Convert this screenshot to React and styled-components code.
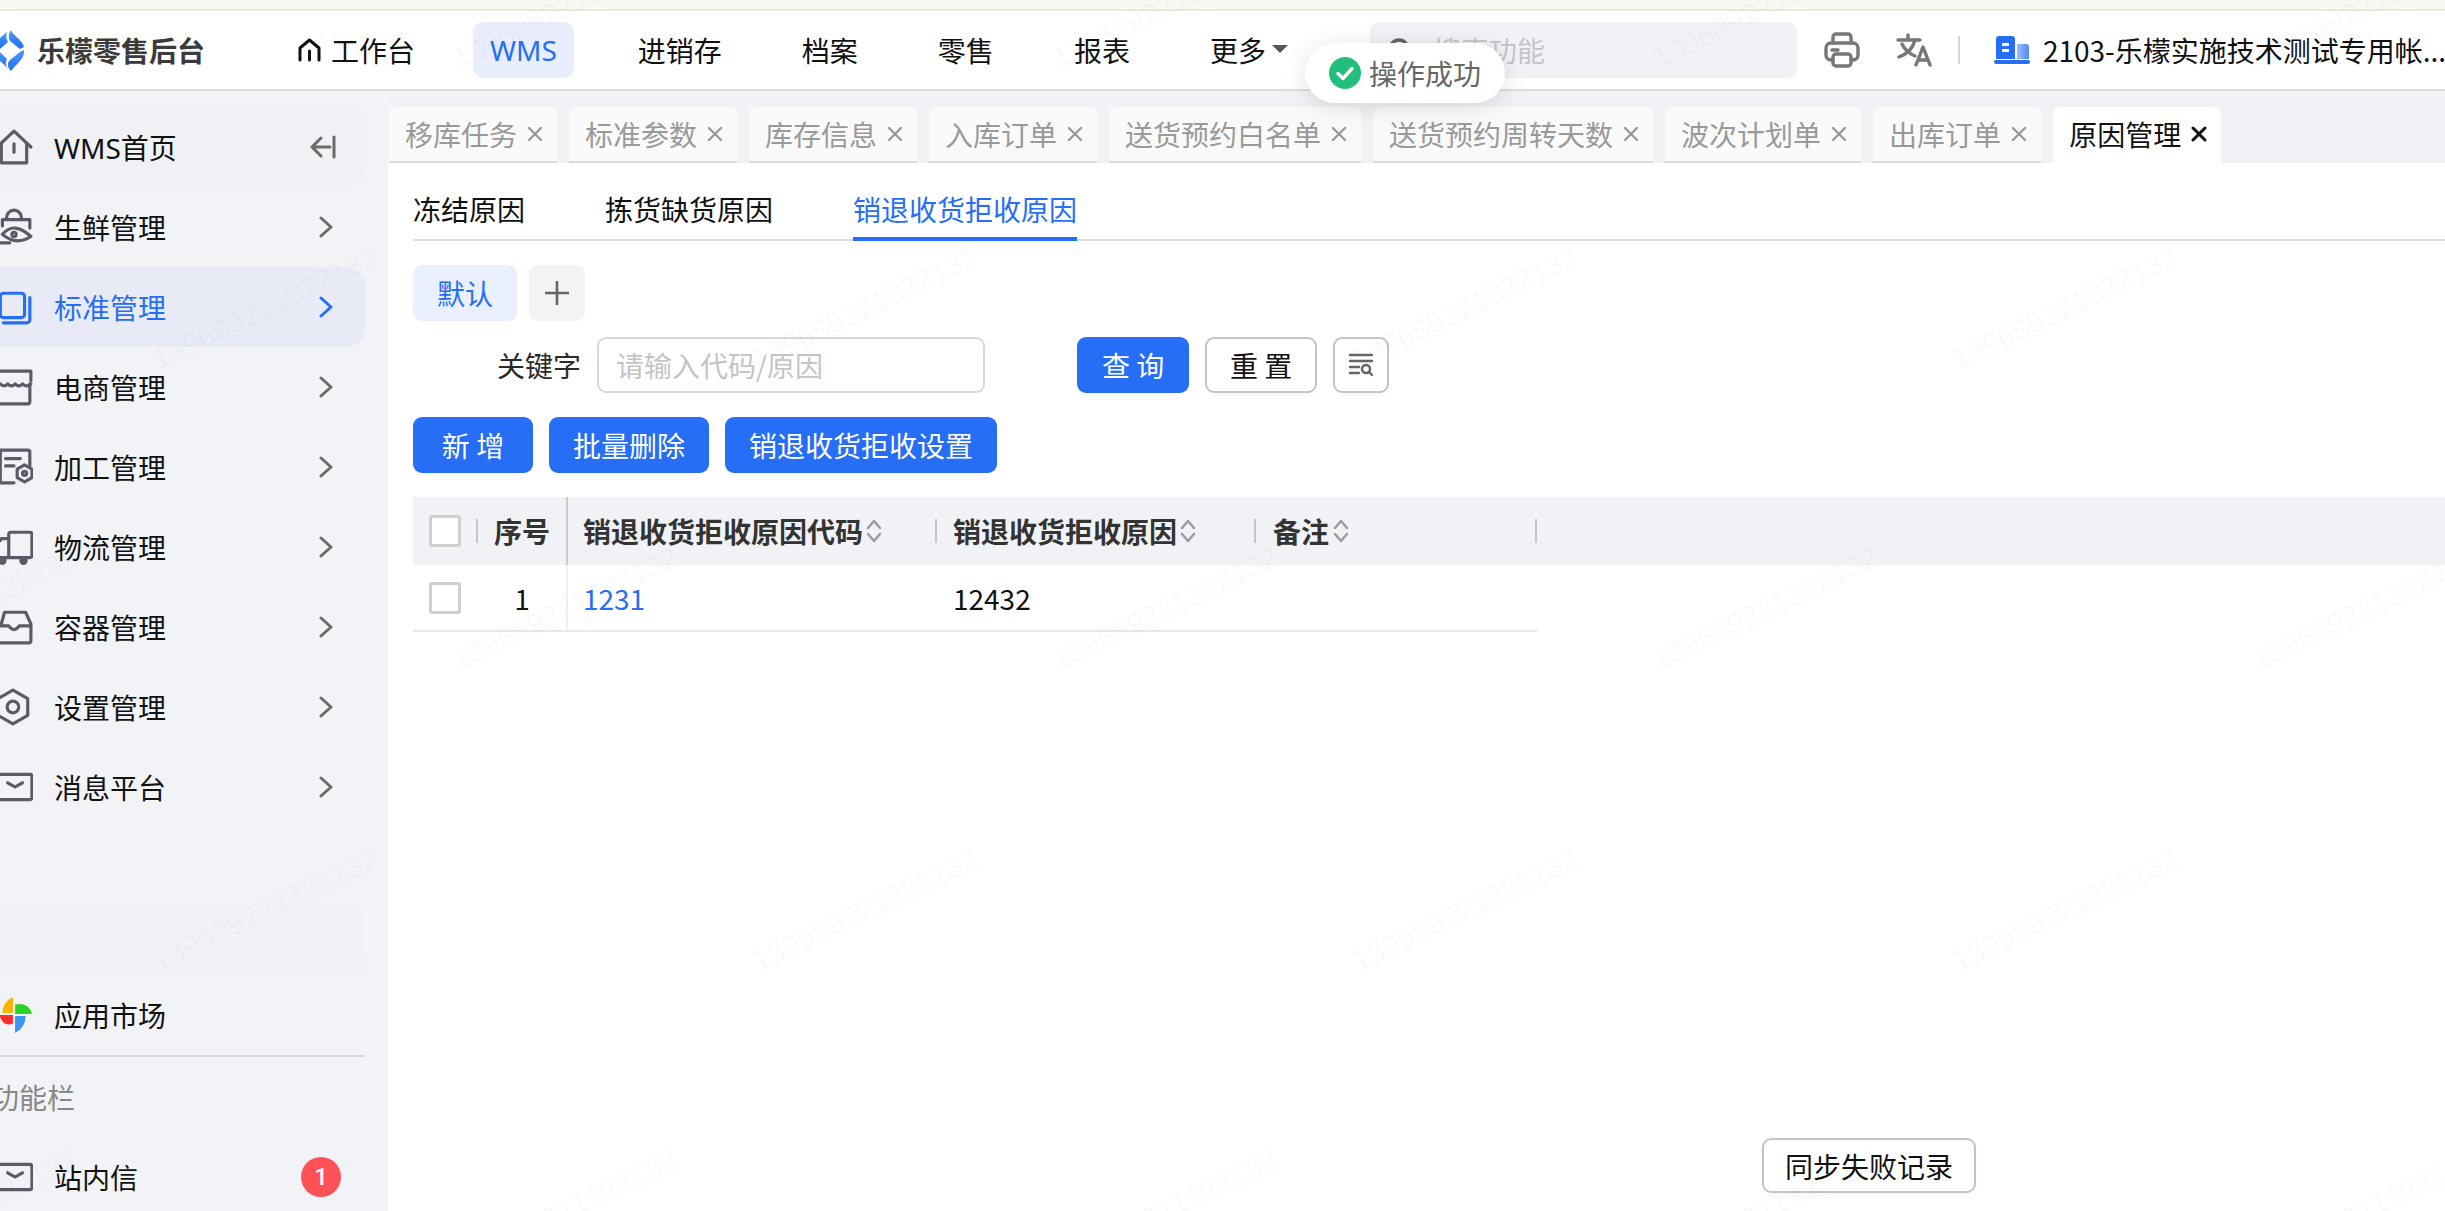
import React from "react";
import styled, { createGlobalStyle } from "styled-components";

const BLUE = "#266ef5";
const FONT = '"Noto Sans CJK SC", "Liberation Sans", sans-serif';

const Global = createGlobalStyle`
  html, body { margin: 0; padding: 0; background: #fff; overflow: hidden; }
  body { font-family: ${FONT}; font-size: 28px; color: #111; }
  * { box-sizing: border-box; }
`;

const Page = styled.div`
  position: relative;
  width: 2445px;
  height: 1211px;
  overflow: hidden;
  display: flex;
  flex-direction: column;
`;
const TopStrip = styled.div`
  height: 11px;
  flex: none;
  background: #f6f9ef;
  border-bottom: 2px solid #e6ebdc;
`;
const Header = styled.header`
  height: 80px;
  flex: none;
  display: flex;
  align-items: center;
  background: #fff;
  border-bottom: 2px solid #dcdcdd;
  white-space: nowrap;
`;
const Logo = styled.div`
  width: 281px;
  flex: none;
  display: flex;
  align-items: center;
  gap: 13px;
  font-weight: 700;
  color: #3b3b3d;
  font-size: 28px;
`;
const LogoMark = styled.svg`
  width: 24px;
  height: 41px;
  flex: none;
`;
const Nav = styled.nav`
  display: flex;
  align-items: center;
  gap: 48px;
`;
const NavItem = styled.div`
  height: 56px;
  padding: 0 ${(p) => (p.$active ? 17 : 16)}px;
  display: flex;
  align-items: center;
  gap: 9px;
  border-radius: 10px;
  line-height: 56px;
  color: ${(p) => (p.$active ? BLUE : "#111")};
  background: ${(p) => (p.$active ? "#e8eefc" : "transparent")};
  margin-right: ${(p) => (p.$tight ? "-6px" : "0")};
`;
const Latin = styled.span`
  font-family: "Noto Sans", sans-serif;
`;
const MoreArrow = styled.i`
  width: 0;
  height: 0;
  border-left: 8px solid transparent;
  border-right: 8px solid transparent;
  border-top: 8px solid #555;
  margin-left: -3px;
  margin-top: -2px;
`;
const Search = styled.div`
  width: 427px;
  height: 56px;
  margin-left: 66px;
  flex: none;
  border-radius: 9px;
  background: #f1f2f5;
  display: flex;
  align-items: center;
  gap: 18px;
  padding-left: 15px;
  color: #c4c5c8;
`;
const HeaderIcon = styled.svg`
  flex: none;
  margin-left: ${(p) => p.$ml}px;
  fill: none;
  stroke: #777;
  stroke-width: 3.4;
  stroke-linecap: round;
  stroke-linejoin: round;
`;
const HeaderDivider = styled.div`
  width: 2px;
  height: 28px;
  margin-left: 26px;
  background: #d5d5d5;
  flex: none;
`;
const BuildingIcon = styled.svg`
  flex: none;
  margin-left: 34px;
`;
const Account = styled.div`
  margin-left: 13px;
  color: #111;
`;
const Body = styled.div`
  flex: 1;
  display: flex;
  min-height: 0;
`;
const Sidebar = styled.aside`
  width: 388px;
  flex: none;
  background: #f2f3f6;
  padding-top: 16px;
  display: flex;
  flex-direction: column;
  overflow: hidden;
`;
const MenuRow = styled.div`
  width: 365px;
  height: 80px;
  flex: none;
  display: flex;
  align-items: center;
  padding-right: 32px;
  border-radius: 0 18px 18px 0;
  color: ${(p) => (p.$active ? BLUE : "#111")};
  background: ${(p) => (p.$active ? "#e8ebf5" : p.$soft ? "#f0f1f4" : "transparent")};
`;
const MenuIcon = styled.svg`
  width: 38px;
  height: 38px;
  flex: none;
  margin-left: -5px;
  margin-right: 21px;
  fill: none;
  stroke: ${(p) => (p.$active ? BLUE : "#5a5b66")};
  stroke-width: 3;
  stroke-linecap: round;
  stroke-linejoin: round;
`;
const MenuText = styled.span`
  flex: 1;
`;
const Chevron = styled.svg`
  width: 14px;
  height: 22px;
  flex: none;
  fill: none;
  stroke: ${(p) => (p.$active ? BLUE : "#6b6b6b")};
  stroke-width: 3;
  stroke-linecap: round;
  stroke-linejoin: round;
`;
const Collapse = styled.svg`
  width: 28px;
  height: 24px;
  flex: none;
  margin-right: -5px;
  fill: none;
  stroke: #6b6b6b;
  stroke-width: 3;
  stroke-linecap: round;
  stroke-linejoin: round;
`;
const SideBottom = styled.div`
  height: 236px;
  flex: none;
`;
const SideFade = styled.div`
  height: 95px;
  width: 365px;
  margin-top: auto;
  flex: none;
  background: linear-gradient(180deg, rgba(0, 0, 0, 0), rgba(0, 0, 0, 0.008));
`;
const SideDivider = styled.div`
  width: 365px;
  height: 2px;
  background: #d8d9dc;
`;
const SideTitle = styled.div`
  height: 80px;
  margin-left: -9px;
  line-height: 80px;
  color: #888;
`;
const Badge = styled.span`
  width: 40px;
  height: 40px;
  margin-right: -8px;
  flex: none;
  border-radius: 50%;
  background: #ff5258;
  color: #fff;
  font-size: 24px;
  font-family: "Roboto", sans-serif;
  font-weight: 500;
  display: flex;
  align-items: center;
  justify-content: center;
`;
const Main = styled.main`
  flex: 1;
  min-width: 0;
  position: relative;
  background: #fff;
  display: flex;
  flex-direction: column;
`;
const TabStrip = styled.div`
  height: 72px;
  flex: none;
  background: #f1f2f5;
  padding: 16px 0 0 1px;
  display: flex;
  gap: 12px;
  white-space: nowrap;
`;
const Tab = styled.div`
  height: 56px;
  padding: 0 14px 0 16px;
  display: flex;
  align-items: center;
  gap: 10px;
  border-radius: 7px 7px 0 0;
  color: ${(p) => (p.$active ? "#111" : "#999")};
  background: ${(p) => (p.$active ? "#fff" : "#fafafa")};
  border-bottom: 2px solid ${(p) => (p.$active ? "#fff" : "#dcdcdc")};
`;
const TabClose = styled.svg`
  width: 16px;
  height: 16px;
  flex: none;
  stroke: ${(p) => (p.$active ? "#111" : "#999")};
  stroke-width: ${(p) => (p.$active ? 3 : 2.4)};
  stroke-linecap: round;
`;
const Content = styled.div`
  flex: 1;
  min-height: 0;
  padding-left: 25px;
  display: flex;
  flex-direction: column;
`;
const SubTabs = styled.div`
  flex: none;
  display: flex;
  gap: 80px;
  padding-top: 26px;
  border-bottom: 2px solid #dcdcdc;
`;
const SubTab = styled.div`
  line-height: 40px;
  padding-bottom: 8px;
  margin-bottom: -2px;
  color: ${(p) => (p.$active ? BLUE : "#111")};
  border-bottom: 4px solid ${(p) => (p.$active ? BLUE : "transparent")};
`;
const PillRow = styled.div`
  display: flex;
  gap: 12px;
  margin-top: 24px;
  height: 56px;
`;
const Pill = styled.div`
  width: 104px;
  border-radius: 9px;
  background: #e9effc;
  color: ${BLUE};
  display: flex;
  align-items: center;
  justify-content: center;
`;
const PlusPill = styled.div`
  width: 56px;
  border-radius: 9px;
  background: #f2f3f5;
  display: flex;
  align-items: center;
  justify-content: center;
`;
const PlusIcon = styled.svg`
  width: 26px;
  height: 26px;
  stroke: #666;
  stroke-width: 2.6;
`;
const FilterRow = styled.div`
  display: flex;
  align-items: center;
  margin-top: 16px;
  height: 56px;
`;
const FilterLabel = styled.label`
  margin-left: 84px;
  color: #2a2a2a;
  white-space: nowrap;
`;
const TextInput = styled.div`
  width: 388px;
  height: 56px;
  margin-left: 16px;
  border: 2px solid #d9d9d9;
  border-radius: 9px;
  padding-left: 17px;
  display: flex;
  align-items: center;
  color: #c4c4c4;
`;
const Button = styled.button`
  height: 56px;
  width: ${(p) => (p.$w ? `${p.$w}px` : "auto")};
  margin-left: ${(p) => p.$ml || 0}px;
  padding: 0;
  flex: none;
  font: inherit;
  border-radius: 9px;
  border: ${(p) => (p.$primary ? "none" : "2px solid #c4c4c4")};
  background: ${(p) => (p.$primary ? BLUE : "#fff")};
  color: ${(p) => (p.$primary ? "#fff" : "#111")};
  box-shadow: 0 3px 0 rgba(0, 0, 0, 0.02);
  display: flex;
  align-items: center;
  justify-content: center;
`;
const FilterGlyph = styled.svg`
  width: 26px;
  height: 26px;
  fill: none;
  stroke: #666;
  stroke-width: 2.4;
  stroke-linecap: round;
`;
const ActionRow = styled.div`
  display: flex;
  gap: 16px;
  margin-top: 24px;
`;
const TableHead = styled.div`
  margin-top: 24px;
  height: 68px;
  flex: none;
  background: #f1f2f5;
  display: grid;
  grid-template-columns: 155px 369px 319px 281px;
  font-weight: 700;
  color: #333;
`;
const TableRow = styled.div`
  width: 1124px;
  height: 67px;
  flex: none;
  display: grid;
  grid-template-columns: 155px 369px 319px 281px;
  border-bottom: 2px solid #e8e8e8;
`;
const FixedCell = styled.div`
  display: flex;
  align-items: center;
  padding-left: 16px;
  border-right: 2px solid ${(p) => (p.$head ? "#c9cbd2" : "#f0f0f0")};
`;
const Checkbox = styled.span`
  width: 32px;
  height: 32px;
  flex: none;
  background: #fff;
  border: 3px solid #cfcfcf;
  border-radius: 3px;
`;
const ThinBar = styled.span`
  width: 2px;
  height: 24px;
  flex: none;
  background: #c4c6cc;
  margin-left: ${(p) => p.$ml || 0}px;
`;
const SeqText = styled.span`
  flex: 1;
  text-align: center;
`;
const SeqSpacer = styled.span`
  width: 17px;
  flex: none;
`;
const HeadCell = styled.div`
  display: flex;
  align-items: center;
  padding-left: ${(p) => p.$pl || 16}px;
  gap: ${(p) => p.$gap || 3}px;
  white-space: nowrap;
`;
const Grow = styled.span`
  flex: 1;
`;
const SortIcon = styled.svg`
  width: 16px;
  height: 26px;
  flex: none;
  fill: none;
  stroke: #9a9a9a;
  stroke-width: 2.4;
  stroke-linecap: round;
  stroke-linejoin: round;
`;
const BodyCell = styled.div`
  display: flex;
  align-items: center;
  padding-left: ${(p) => p.$pl || 16}px;
  color: ${(p) => (p.$link ? BLUE : "#111")};
`;
const SyncButton = styled(Button)`
  position: absolute;
  left: 1374px;
  top: 1047px;
  width: 214px;
  height: 55px;
  box-shadow: 0 2px 4px rgba(0, 0, 0, 0.04);
`;
const Toast = styled.div`
  position: absolute;
  left: 1305px;
  top: 43px;
  width: 200px;
  height: 60px;
  border-radius: 30px;
  background: #fff;
  box-shadow: 0 4px 24px rgba(0, 0, 0, 0.12);
  display: flex;
  align-items: center;
  gap: 8px;
  padding-left: 24px;
  color: #666;
  z-index: 30;
`;
const ToastIcon = styled.svg`
  width: 32px;
  height: 32px;
  flex: none;
`;
const WatermarkLayer = styled.div`
  position: absolute;
  inset: 0;
  pointer-events: none;
  overflow: hidden;
  z-index: 20;
`;
const Mark = styled.span.attrs((p) => ({ style: { left: p.$x, top: p.$y } }))`
  position: absolute;
  transform: translate(-50%, -50%) rotate(-25.7deg);
  font-family: "Liberation Sans", sans-serif;
  font-size: 29.5px;
  color: rgba(0, 0, 0, 0.028);
  white-space: nowrap;
`;

const marks = [];
for (let j = -1; j < 3; j++) {
  for (let i = -1; i < 5; i++) {
    marks.push([265 + 600 * i, 308 + 602 * j]);
    marks.push([565 + 600 * i, 609 + 602 * j]);
  }
}

const ChevronRight = ({ active }) => (
  <Chevron viewBox="0 0 14 22" $active={active}>
    <path d="M2 2l10 9-10 9" />
  </Chevron>
);

const icons = {
  home: (
    <>
      <path d="M2 18L18 3l16 15" />
      <path d="M6 15v18h24V15" />
      <path d="M18 15v8" />
    </>
  ),
  fresh: (
    <>
      <path d="M11 11V9a7 7 0 0 1 14 0v2" />
      <path d="M7 17v-6h26v8" />
      <path d="M7 25q11-13 27 2q-14 9-27-2" />
      <circle cx="18" cy="25" r="2" />
      <path d="M4 33h10" />
    </>
  ),
  standard: (
    <>
      <rect x="5" y="5" width="23" height="23" rx="3" />
      <path d="M33 9v21a3 3 0 0 1-3 3H8" />
    </>
  ),
  shop: (
    <>
      <path d="M5 3h29v9M34 12v-9" />
      <path d="M5 15q4 4 7 0q4 4 7 0q4 4 7 0q4 4 8 0" />
      <path d="M33 15v17a2 2 0 0 1-2 2H5" />
    </>
  ),
  process: (
    <>
      <path d="M33 17V4a2 2 0 0 0-2-2H5v31h13" />
      <path d="M10 10h14M10 17h8" />
      <path d="M28 16l7 4v8l-7 4-7-4v-8z" />
      <circle cx="28" cy="24" r="2" />
    </>
  ),
  truck: (
    <>
      <path d="M13 26V6a2 2 0 0 1 2-2h18a2 2 0 0 1 2 2v20a2 2 0 0 1-2 2H5" />
      <path d="M13 10H6l-1 2" />
      <circle cx="7" cy="31" r="2.5" fill="#5a5b66" />
      <circle cx="27" cy="31" r="2.5" fill="#5a5b66" />
    </>
  ),
  box: (
    <>
      <path d="M6 15l3-11h20l5 11v16a2 2 0 0 1-2 2H5" />
      <path d="M5 17h8q5 7 10 0h11" />
    </>
  ),
  gear: (
    <>
      <path d="M17 2l14 8v16l-14 8-14-8V10z" />
      <circle cx="17" cy="18" r="5.500" />
    </>
  ),
  mail: (
    <>
      <path d="M5 6h28a2 2 0 0 1 2 2v20a2 2 0 0 1-2 2H5" />
      <path d="M12 14l7 4 7-4" />
    </>
  ),
};

const menu = [
  ["生鲜管理", "fresh"],
  ["标准管理", "standard", true],
  ["电商管理", "shop"],
  ["加工管理", "process"],
  ["物流管理", "truck"],
  ["容器管理", "box"],
  ["设置管理", "gear"],
  ["消息平台", "mail"],
];

const tabs = [
  "移库任务",
  "标准参数",
  "库存信息",
  "入库订单",
  "送货预约白名单",
  "送货预约周转天数",
  "波次计划单",
  "出库订单",
];

const Close = ({ active }) => (
  <TabClose viewBox="0 0 16 16" $active={active}>
    <path d="M2 2l12 12M14 2L2 14" />
  </TabClose>
);

const Sort = () => (
  <SortIcon viewBox="0 0 16 26">
    <path d="M2 10l6-7 6 7M2 16l6 7 6-7" />
  </SortIcon>
);

export default function App() {
  return (
    <Page>
      <Global />
      <TopStrip />
      <Header>
        <Logo>
          <LogoMark viewBox="0 0 24 41">
            <defs>
              <linearGradient id="lg" x1="0" y1="0" x2="0" y2="1">
                <stop offset="0" stopColor="#4a97fa" />
                <stop offset="1" stopColor="#2470f2" />
              </linearGradient>
            </defs>
            <path d="M11 0C12 5 22 9 24 17L20 19 10 11C8 7 9 3 11 0z" fill="url(#lg)" />
            <path d="M24 20C25 29 16 34 11 41C7 37 7 33 10 30L20 22z" fill="url(#lg)" />
            <path d="M7 2C6 6 6 9 8 12L0 19V8z" fill="url(#lg)" />
            <path d="M0 22L7 29C5 33 6 36 8 39C5 35 2 33 0 31z" fill="url(#lg)" />
          </LogoMark>
          乐檬零售后台
        </Logo>
        <Nav>
          <NavItem $tight>
            <svg width="25" height="24" viewBox="0 0 25 24" fill="none" stroke="#111" strokeWidth="3" strokeLinecap="round" strokeLinejoin="round">
              <path d="M3 22V10L12.5 2 22 10v12" />
              <path d="M12.5 13v9" />
            </svg>
            工作台
          </NavItem>
          <NavItem $active><Latin>WMS</Latin></NavItem>
          <NavItem>进销存</NavItem>
          <NavItem>档案</NavItem>
          <NavItem>零售</NavItem>
          <NavItem>报表</NavItem>
          <NavItem>
            更多
            <MoreArrow />
          </NavItem>
        </Nav>
        <Search>
          <svg width="30" height="30" viewBox="0 0 30 30" fill="none" stroke="#666" strokeWidth="3.5" strokeLinecap="round">
            <circle cx="14" cy="14" r="9" />
            <path d="M21 21l5 5" />
          </svg>
          搜索功能
        </Search>
        <HeaderIcon $ml={27} width="36" height="36" viewBox="0 0 36 36">
          <path d="M9 11V5a3 3 0 0 1 3-3h12a3 3 0 0 1 3 3v6" />
          <path d="M9 28H7a5 5 0 0 1-5-5v-7a5 5 0 0 1 5-5h22a5 5 0 0 1 5 5v7a5 5 0 0 1-5 5h-2" />
          <rect x="9" y="22" width="18" height="12" rx="3" />
          <path d="M8 18h6" />
        </HeaderIcon>
        <HeaderIcon $ml={36} width="36" height="34" viewBox="0 0 36 34">
          <path d="M2 7h22M12 2v5" />
          <path d="M19 7c-2 8-8 14-16 17" />
          <path d="M6 11c3 6 8 10 13 12" />
          <path d="M20 32l7-18 7 18M22.500 27h9" />
        </HeaderIcon>
        <HeaderDivider />
        <BuildingIcon width="36" height="30" viewBox="0 0 36 30">
          <defs>
            <linearGradient id="bd" x1="0" y1="0" x2="1" y2="0">
              <stop offset="0" stopColor="#9dbcf8" />
              <stop offset="1" stopColor="#4f8af6" />
            </linearGradient>
          </defs>
          <path d="M2 24V4a3 3 0 0 1 3-3h13a3 3 0 0 1 3 3v20z" fill={BLUE} />
          <path d="M23 9h9a3 3 0 0 1 3 3v12H23z" fill="url(#bd)" />
          <rect x="8" y="8" width="7" height="3" fill="#fff" />
          <rect x="8" y="14" width="7" height="3" fill="#fff" />
          <rect x="0" y="25" width="36" height="4" rx="2" fill={BLUE} />
        </BuildingIcon>
        <Account>2103-乐檬实施技术测试专用帐...</Account>
      </Header>
      <Body>
        <Sidebar>
          <MenuRow $soft>
            <MenuIcon viewBox="0 0 36 36">{icons.home}</MenuIcon>
            <MenuText><Latin>WMS</Latin>首页</MenuText>
            <Collapse viewBox="0 0 28 24">
              <path d="M24 2v20M20 12H3M11 3l-9 9 9 9" />
            </Collapse>
          </MenuRow>
          {menu.map(([label, icon, active]) => (
            <MenuRow key={label} $active={active}>
              <MenuIcon viewBox="0 0 36 36" $active={active}>{icons[icon]}</MenuIcon>
              <MenuText>{label}</MenuText>
              <ChevronRight active={active} />
            </MenuRow>
          ))}
          <SideFade />
          <SideBottom>
            <MenuRow>
              <MenuIcon viewBox="0 0 36 36">
                <g stroke="none">
                  <path d="M17 1V16H7Q7 6 17 1z" fill="#ffb300" />
                  <path d="M19 8Q32 6 35 17H19z" fill="#2ad52a" />
                  <path d="M19 19H29Q29 30 19 35z" fill="#3b95f5" />
                  <path d="M4 18H17V26Q8 30 4 18z" fill="#ff2d2d" />
                </g>
              </MenuIcon>
              <MenuText>应用市场</MenuText>
            </MenuRow>
            <SideDivider />
            <SideTitle>功能栏</SideTitle>
            <MenuRow>
              <MenuIcon viewBox="0 0 36 36">{icons.mail}</MenuIcon>
              <MenuText>站内信</MenuText>
              <Badge>1</Badge>
            </MenuRow>
          </SideBottom>
        </Sidebar>
        <Main>
          <TabStrip>
            {tabs.map((t) => (
              <Tab key={t}>
                {t}
                <Close />
              </Tab>
            ))}
            <Tab $active>
              原因管理
              <Close active />
            </Tab>
          </TabStrip>
          <Content>
            <SubTabs>
              <SubTab>冻结原因</SubTab>
              <SubTab>拣货缺货原因</SubTab>
              <SubTab $active>销退收货拒收原因</SubTab>
            </SubTabs>
            <PillRow>
              <Pill>默认</Pill>
              <PlusPill>
                <PlusIcon viewBox="0 0 26 26">
                  <path d="M13 1v24M1 13h24" />
                </PlusIcon>
              </PlusPill>
            </PillRow>
            <FilterRow>
              <FilterLabel>关键字</FilterLabel>
              <TextInput>请输入代码/原因</TextInput>
              <Button $primary $w={112} $ml={92}>查 询</Button>
              <Button $w={112} $ml={16}>重 置</Button>
              <Button $w={56} $ml={16}>
                <FilterGlyph viewBox="0 0 26 26">
                  <path d="M2 3h22M2 9h22M2 15h9M2 21h9" />
                  <circle cx="18" cy="17" r="4" />
                  <path d="M21 20l3 3" />
                </FilterGlyph>
              </Button>
            </FilterRow>
            <ActionRow>
              <Button $primary $w={120}>新 增</Button>
              <Button $primary $w={160}>批量删除</Button>
              <Button $primary $w={272}>销退收货拒收设置</Button>
            </ActionRow>
            <TableHead>
              <FixedCell $head>
                <Checkbox />
                <ThinBar $ml={15} />
                <SeqText>序号</SeqText>
              </FixedCell>
              <HeadCell $pl={15}>
                销退收货拒收原因代码
                <Sort />
                <Grow />
                <ThinBar />
              </HeadCell>
              <HeadCell>
                销退收货拒收原因
                <Sort />
                <Grow />
                <ThinBar />
              </HeadCell>
              <HeadCell $pl={17} $gap={4}>
                备注
                <Sort />
                <Grow />
                <ThinBar />
              </HeadCell>
            </TableHead>
            <TableRow>
              <FixedCell>
                <Checkbox />
                <SeqSpacer />
                <SeqText>1</SeqText>
              </FixedCell>
              <BodyCell $link $pl={15}>1231</BodyCell>
              <BodyCell>12432</BodyCell>
              <BodyCell />
            </TableRow>
          </Content>
          <SyncButton>同步失败记录</SyncButton>
        </Main>
      </Body>
      <WatermarkLayer>
        {marks.map(([x, y]) => (
          <Mark key={`${x}-${y}`} $x={x} $y={y}>139689221322132</Mark>
        ))}
      </WatermarkLayer>
      <Toast>
        <ToastIcon viewBox="0 0 32 32">
          <circle cx="16" cy="16" r="16" fill="#21bf7b" />
          <path d="M9 16.500l5 5 9-10" fill="none" stroke="#fff" strokeWidth="3.4" strokeLinecap="round" strokeLinejoin="round" />
        </ToastIcon>
        操作成功
      </Toast>
    </Page>
  );
}
